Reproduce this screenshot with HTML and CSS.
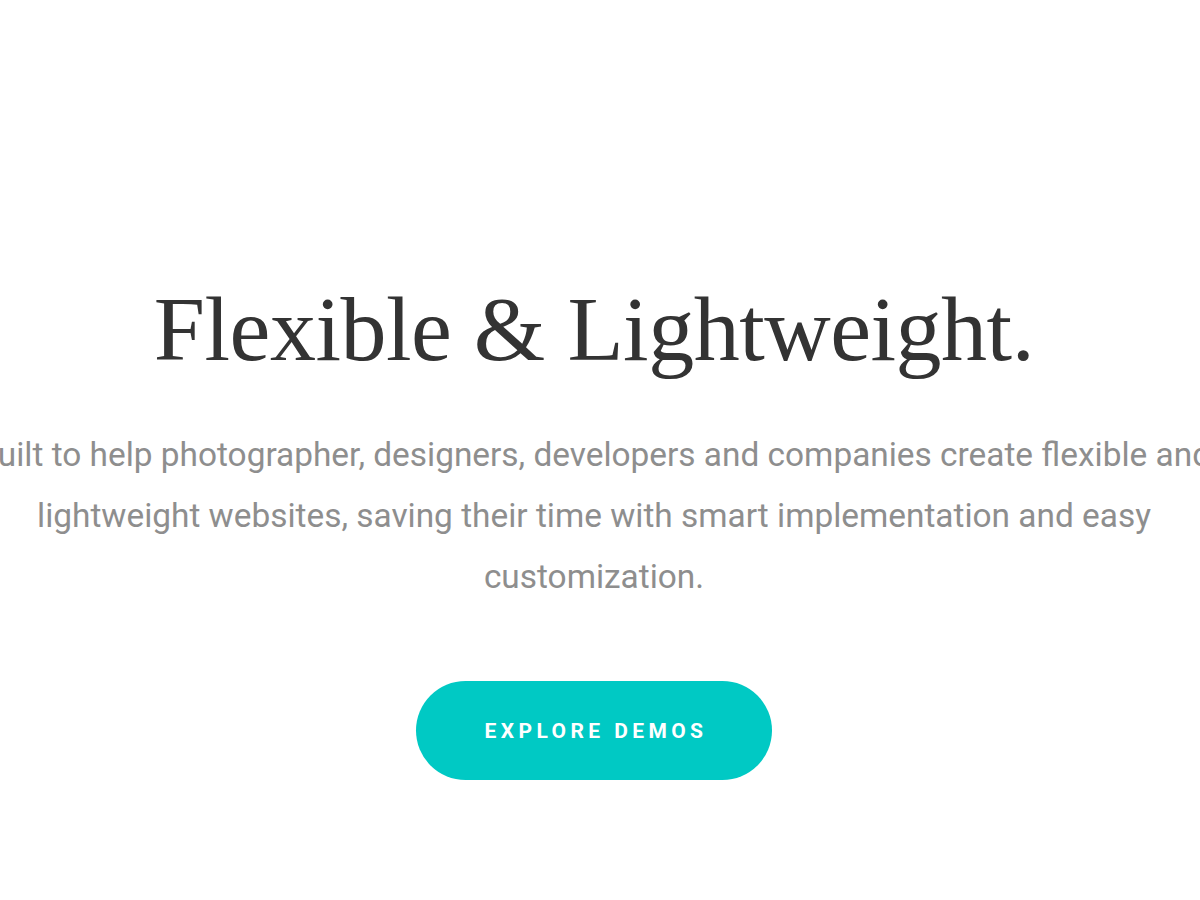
FILE: index.html
```html
<!DOCTYPE html>
<html lang="en">
<head>
<meta charset="utf-8">
<title>Flexible &amp; Lightweight</title>
<link rel="stylesheet" href="styles.css">
</head>
<body>
<main class="hero">
  <h1 class="hero-title">Flexible &amp; Lightweight.</h1>
  <p class="hero-text">Built to help photographer, designers, developers and companies create flexible and lightweight websites, saving their time with smart implementation and easy customization.</p>
  <a class="hero-button" href="#">Explore Demos</a>
</main>
</body>
</html>
```

FILE: styles.css
```css
html, body {
  margin: 0;
  padding: 0;
  background: #ffffff;
  overflow: hidden;
  width: 1200px;
  height: 900px;
}

.hero {
  width: 1200px;
  height: 900px;
  display: flex;
  flex-direction: column;
  align-items: center;
  padding: 274px 12px 0 0;
  box-sizing: border-box;
}

.hero-title {
  margin: 0;
  font-family: "Liberation Serif", "DejaVu Serif", serif;
  font-weight: 400;
  font-size: 92px;
  line-height: 110px;
  color: #333333;
  letter-spacing: -0.5px;
}

.hero-text {
  margin: 40px 0 0;
  width: 1260px;
  flex-shrink: 0;
  font-family: Roboto, "Liberation Sans", sans-serif;
  font-size: 33.4px;
  line-height: 61px;
  color: #8e8e8e;
  text-align: center;
}

.hero-button {
  margin-top: 74px;
  width: 356px;
  height: 99px;
  box-sizing: border-box;
  padding-left: 4px;
  border-radius: 50px;
  background: #00c9c4;
  color: #ffffff;
  display: flex;
  align-items: center;
  justify-content: center;
  font-family: Roboto, "Liberation Sans", sans-serif;
  font-weight: 700;
  font-size: 21px;
  letter-spacing: 4.4px;
  text-transform: uppercase;
  text-decoration: none;
}
```
